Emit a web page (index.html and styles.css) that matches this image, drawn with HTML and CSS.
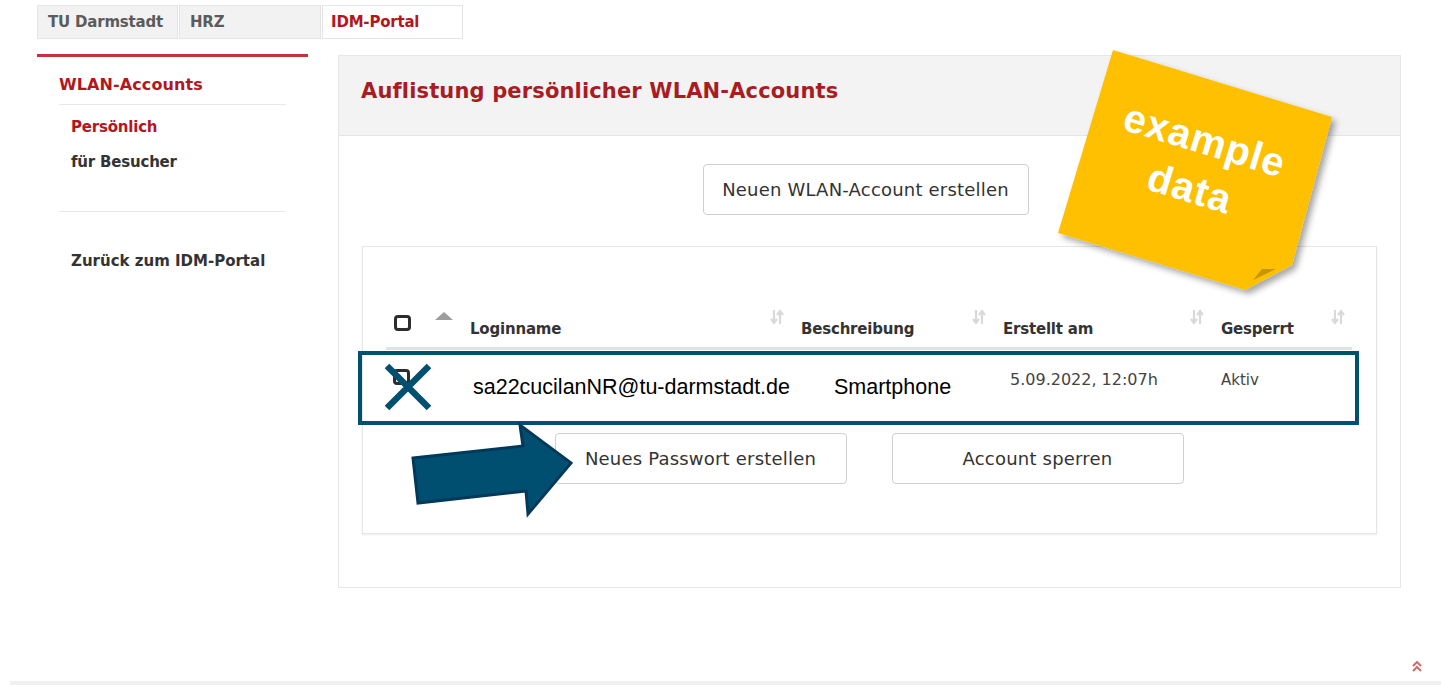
FILE: index.html
```html
<!DOCTYPE html>
<html lang="de">
<head>
<meta charset="utf-8">
<title>IDM-Portal – WLAN-Accounts</title>
<link rel="stylesheet" href="styles.css">
</head>
<body>
<div class="page">
  <nav class="crumbs">
    <a class="crumb">TU Darmstadt</a>
    <a class="crumb crumb-hrz">HRZ</a>
    <a class="crumb crumb-active">IDM-Portal</a>
  </nav>

  <div class="layout">
    <aside class="sidebar">
      <div class="side-title">WLAN-Accounts</div>
      <ul class="side-list">
        <li class="side-item side-item-active">Persönlich</li>
        <li class="side-item">für Besucher</li>
      </ul>
      <div class="side-back">Zurück zum IDM-Portal</div>
    </aside>

    <main class="panel">
      <header class="panel-head">
        <h1 class="panel-title">Auflistung persönlicher WLAN-Accounts</h1>
      </header>
      <div class="panel-body">
        <div class="create-row">
          <button class="btn btn-create">Neuen WLAN-Account erstellen</button>
        </div>

        <div class="table-box">
          <table class="accounts">
            <colgroup>
              <col class="c-check"><col class="c-login"><col class="c-desc"><col class="c-date"><col class="c-lock">
            </colgroup>
            <thead>
              <tr>
                <th>
                  <div class="th-inner">
                    <span class="checkbox"></span>
                    <svg class="sort-asc" viewBox="0 0 18 8" width="18" height="8"><polygon points="9,0 18,8 0,8" fill="#9d9d9d"/></svg>
                  </div>
                </th>
                <th>
                  <div class="th-inner"><span class="th-label">Loginname</span>
                    <svg class="sort-both" viewBox="0 0 16 16" width="16" height="16"><path d="M5 1v13M2 10l3 4 3-4M11 15V2M8 6l3-4 3 4" fill="none" stroke="#d9d9d9" stroke-width="2.2"/></svg>
                  </div>
                </th>
                <th>
                  <div class="th-inner"><span class="th-label">Beschreibung</span>
                    <svg class="sort-both" viewBox="0 0 16 16" width="16" height="16"><path d="M5 1v13M2 10l3 4 3-4M11 15V2M8 6l3-4 3 4" fill="none" stroke="#d9d9d9" stroke-width="2.2"/></svg>
                  </div>
                </th>
                <th>
                  <div class="th-inner"><span class="th-label">Erstellt am</span>
                    <svg class="sort-both" viewBox="0 0 16 16" width="16" height="16"><path d="M5 1v13M2 10l3 4 3-4M11 15V2M8 6l3-4 3 4" fill="none" stroke="#d9d9d9" stroke-width="2.2"/></svg>
                  </div>
                </th>
                <th>
                  <div class="th-inner"><span class="th-label">Gesperrt</span>
                    <svg class="sort-both" viewBox="0 0 16 16" width="16" height="16"><path d="M5 1v13M2 10l3 4 3-4M11 15V2M8 6l3-4 3 4" fill="none" stroke="#d9d9d9" stroke-width="2.2"/></svg>
                  </div>
                </th>
              </tr>
            </thead>
            <tbody>
              <tr>
                <td class="td-check"><span class="checkbox checkbox-row"></span></td>
                <td class="td-login">sa22cucilanNR@tu-darmstadt.de</td>
                <td class="td-desc">Smartphone</td>
                <td class="td-date">5.09.2022, 12:07h</td>
                <td class="td-lock">Aktiv</td>
              </tr>
            </tbody>
          </table>

          <div class="actions">
            <button class="btn btn-action">Neues Passwort erstellen</button>
            <button class="btn btn-action">Account sperren</button>
          </div>
        </div>
      </div>
    </main>
  </div>

  <footer class="foot"></footer>

  <!-- highlight around the selected account row -->
  <div class="row-mark"></div>

  <!-- cross over the row checkbox -->
  <svg class="cross" viewBox="0 0 48 48" width="48" height="48">
    <path d="M3 3L45 45M45 3L3 45" stroke="#01506f" stroke-width="6.5" fill="none"/>
  </svg>

  <!-- pointer arrow towards the password button -->
  <svg class="pointer" viewBox="0 0 175 105" width="175" height="105">
    <polygon points="8,40 118,28 115,7 166,45 123,96 121,73 13,85" fill="#014f70" stroke="#00395a" stroke-width="3" stroke-linejoin="miter"/>
  </svg>

  <!-- sticky note -->
  <svg class="note" viewBox="0 0 320 270" width="320" height="270">
    <defs>
      <filter id="noteShadow" x="-10%" y="-10%" width="130%" height="130%">
        <feDropShadow dx="4" dy="4" stdDeviation="3" flood-color="#000" flood-opacity="0.35"/>
      </filter>
    </defs>
    <polygon points="73,10 292,77 252,225 205,250 18,193" fill="#fec000" filter="url(#noteShadow)"/>
    <polygon points="213,240 236,229 222,229" fill="#c79500"/>
    <text class="note-text" x="165" y="100" transform="rotate(17 165 100)">example</text>
    <text class="note-text" x="150" y="148" transform="rotate(17 150 148)">data</text>
  </svg>

  <a class="to-top">
    <svg viewBox="0 0 10 11" width="10" height="11"><path d="M1 5l4-4 4 4M1 10l4-4 4 4" fill="none" stroke="#d36a6a" stroke-width="2"/></svg>
  </a>
</div>
</body>
</html>
```

FILE: styles.css
```css
* { box-sizing: border-box; }

html, body {
  margin: 0;
  padding: 0;
  background: #fff;
}

body {
  width: 1441px;
  height: 685px;
  overflow: hidden;
  font-family: "DejaVu Sans", Verdana, sans-serif;
  color: #333;
}

.page {
  position: relative;
  height: 685px;
  padding: 5px 0 0 37px;
  display: flex;
  flex-direction: column;
}

/* breadcrumb tabs */
.crumbs {
  display: flex;
  gap: 1px;
  height: 34px;
}

.crumb {
  display: flex;
  align-items: center;
  width: 141px;
  padding: 0 0 0 10px;
  border: 1px solid #e4e4e4;
  background: #f2f2f2;
  color: #5b5b5b;
  font-size: 15px;
  font-weight: bold;
  letter-spacing: -0.2px;
  text-decoration: none;
}

.crumb-hrz { width: 142px; }

.crumb-active {
  background: #fff;
  color: #b3161d;
  padding-left: 8px;
}

/* two-column layout */
.layout {
  display: flex;
  margin-top: 15px;
}

.sidebar {
  width: 271px;
  border-top: 3px solid #c8303a;
  padding: 0 22px;
}

.side-title {
  padding: 18px 0 9px;
  line-height: 20px;
  border-bottom: 1px solid #e8e8e8;
  color: #b3161d;
  font-size: 16px;
  font-weight: bold;
  letter-spacing: 0.1px;
}

.side-list {
  list-style: none;
  margin: 0;
  padding: 5px 0 31px 12px;
  border-bottom: 1px solid #e8e8e8;
}

.side-item {
  line-height: 35px;
  font-size: 15px;
  font-weight: bold;
  letter-spacing: -0.2px;
  color: #333;
}

.side-item-active { color: #b3161d; }

.side-back {
  margin-top: 39px;
  padding-left: 12px;
  line-height: 20px;
  font-size: 15px;
  font-weight: bold;
  letter-spacing: 0;
  color: #333;
}

/* main panel */
.panel {
  width: 1063px;
  margin: 1px 0 0 30px;
  border: 1px solid #e6e6e6;
  align-self: flex-start;
}

.panel-head {
  height: 80px;
  background: #f3f3f3;
  border-bottom: 1px solid #e6e6e6;
  padding: 22px 0 0 22px;
}

.panel-title {
  margin: 0;
  line-height: 26px;
  font-size: 21px;
  font-weight: bold;
  letter-spacing: 0.15px;
  color: #a91c22;
}

.panel-body {
  padding: 28px 23px 53px;
}

.create-row {
  display: flex;
  justify-content: center;
  padding-right: 8px;
}

.btn {
  height: 51px;
  border: 1px solid #cfcfcf;
  border-radius: 4px;
  background: #fff;
  font-family: "DejaVu Sans", Verdana, sans-serif;
  font-size: 18px;
  letter-spacing: 0.2px;
  color: #333;
  padding: 0;
}

.btn-create { width: 326px; }

.table-box {
  margin-top: 31px;
  border: 1px solid #e6e6e6;
  box-shadow: 0 1px 2px rgba(0, 0, 0, 0.08);
  padding: 0 24px 49px 23px;
}

/* accounts table */
.accounts {
  width: 966px;
  border-collapse: separate;
  border-spacing: 0;
  table-layout: fixed;
}

.c-check { width: 74px; }
.c-login { width: 331px; }
.c-desc { width: 202px; }
.c-date { width: 218px; }
.c-lock { width: 141px; }

.accounts th {
  padding: 62px 6px 8px 10px;
  border-bottom: 3px solid #e2e2e2;
  text-align: left;
  font-size: 15px;
  font-weight: bold;
  letter-spacing: -0.2px;
  color: #333;
}

.accounts th:first-child { padding-left: 8px; padding-right: 7px; }

.th-inner {
  display: flex;
  justify-content: space-between;
  height: 30px;
}

.th-label {
  align-self: flex-end;
  line-height: 20px;
}

.sort-both { flex: none; }

.sort-asc {
  flex: none;
  margin-top: 3px;
}

.checkbox {
  display: block;
  width: 17px;
  height: 16px;
  margin-top: 6px;
  border: 3px solid #2d2d2d;
  border-radius: 4px;
}

.accounts td {
  height: 74px;
  vertical-align: top;
  padding: 20px 0 0 10px;
  font-size: 15px;
  line-height: 20px;
  letter-spacing: 0;
  color: #444;
  white-space: nowrap;
}

.accounts td.td-check { padding: 16px 0 0 7px; }

.checkbox-row { margin-top: 3px; }

.accounts td.td-login,
.accounts td.td-desc {
  vertical-align: middle;
  padding-top: 0;
  font-family: "Liberation Sans", Arial, sans-serif;
  font-size: 21.5px;
  color: #000;
}

.accounts td.td-login { padding-left: 13px; }
.accounts td.td-desc { padding-left: 43px; }

.accounts td.td-date {
  padding-left: 17px;
  font-size: 16px;
}

.actions {
  display: flex;
  justify-content: center;
  gap: 45px;
  margin-top: 9px;
}

.btn-action { width: 292px; }

/* bottom strip */
.foot {
  margin-top: auto;
  margin-left: -27px;
  height: 4px;
  background: #f0f0f0;
}

/* annotation layer */
.row-mark {
  position: absolute;
  left: 358px;
  top: 351px;
  width: 1001px;
  height: 74px;
  border: 4px solid #01506f;
}

.cross {
  position: absolute;
  left: 384px;
  top: 363px;
}

.pointer {
  position: absolute;
  left: 405px;
  top: 418px;
}

.note {
  position: absolute;
  left: 1040px;
  top: 40px;
}

.note-text {
  fill: #fff;
  font-family: "Liberation Sans", Arial, sans-serif;
  font-weight: bold;
  font-size: 40px;
  letter-spacing: 1px;
  text-anchor: middle;
  dominant-baseline: central;
}

.to-top {
  position: absolute;
  right: 19px;
  bottom: 13px;
  display: block;
  width: 10px;
  height: 11px;
}

.to-top svg { display: block; }
```
